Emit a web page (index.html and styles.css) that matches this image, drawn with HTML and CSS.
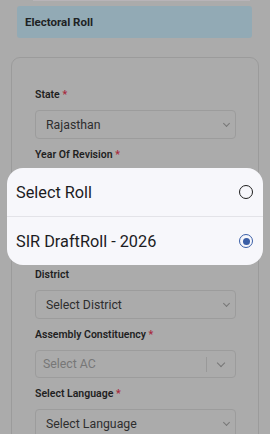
FILE: index.html
```html
<!DOCTYPE html>
<html>
<head>
<meta charset="utf-8">
<link rel="stylesheet" href="styles.css">
</head>
<body>
<div class="page">
  <div class="topline"></div>
  <div class="header">Electoral Roll</div>
  <div class="card">
    <div class="label">State <span class="req">*</span></div>
    <div class="select"><span>Rajasthan</span><span class="chev"></span></div>
    <div class="label">Year Of Revision <span class="req">*</span></div>
    <div class="select"><span></span><span class="chev"></span></div>
    <div class="label">&nbsp;</div>
    <div class="select"><span></span><span class="chev"></span></div>
    <div class="label">District</div>
    <div class="select"><span>Select District</span><span class="chev"></span></div>
    <div class="label">Assembly Constituency <span class="req">*</span></div>
    <div class="select rs"><span class="ph">Select AC</span><span class="sep"></span><span class="chev big"></span></div>
    <div class="label">Select Language <span class="req">*</span></div>
    <div class="select"><span>Select Language</span><span class="chev"></span></div>
  </div>
  <div class="sheet">
    <div class="opt"><span>Select Roll</span><span class="radio"></span></div>
    <div class="opt"><span>SIR DraftRoll - 2026</span><span class="radio on"></span></div>
  </div>
</div>
</body>
</html>
```
FILE: styles.css
```css
html, body { margin: 0; padding: 0; }
body {
  width: 270px; height: 434px; overflow: hidden;
  background: #ababab;
  font-family: Roboto, "Noto Sans", sans-serif;
  color: #1c1c1c;
}
.page { position: relative; height: 434px; overflow: hidden; }
.topline {
  height: 1px; margin: 0 20px 0 33px; background: #b8b4b8;
}
.header {
  margin: 5px 18px 0 17px;
  height: 32px; line-height: 32px;
  background: #92aab5; border-radius: 3px;
  padding-left: 8px;
  font-size: 11.5px; font-weight: 700; color: #1e2224;
}
.card {
  margin: 19px 11px 0 11px;
  border: 1px solid #9b9b9b; border-radius: 9px;
  padding: 29px 22px 20px 23px;
}
.label {
  font-size: 10.5px; font-weight: 600; line-height: 16px;
  color: #1f1f1f; margin-bottom: 7px;
}
.req { color: #a8283c; }
.select {
  height: 27px; border: 1px solid #9c9c9c; border-radius: 4px;
  display: flex; align-items: center; justify-content: space-between;
  padding: 0 6px 0 10px; margin-bottom: 8px;
  font-size: 12.3px; color: #2e2e2e;
}
.chev {
  width: 4px; height: 4px; border-right: 1px solid #777; border-bottom: 1px solid #777;
  transform: rotate(45deg); margin-top: -3px;
}
.select.rs { height: 26px; padding-left: 7px; padding-right: 11px; }
.select.rs .ph { flex: 1; color: #777; }
.sep { width: 1px; height: 15px; background: #999; margin-right: 11px; }
.chev.big { width: 5px; height: 5px; }
.sheet {
  position: absolute; left: 7px; top: 168px; width: 256px;
  background: #f7f7fb; border-radius: 16px; overflow: hidden;
}
.opt {
  height: 48px; display: flex; align-items: center; justify-content: space-between;
  padding: 0 10px 0 9px; font-size: 16.3px; color: #1c1c1f;
}
.opt + .opt { border-top: 1px solid #e3e3e8; }
.radio {
  width: 12px; height: 12px; border: 1.5px solid #1e1e1e; border-radius: 50%;
  box-sizing: content-box; position: relative;
}
.radio.on { border-color: #3a5ea6; }
.radio.on::after {
  content: ""; position: absolute; left: 2.5px; top: 2.5px; width: 7px; height: 7px;
  border-radius: 50%; background: #3a5ea6;
}
```
